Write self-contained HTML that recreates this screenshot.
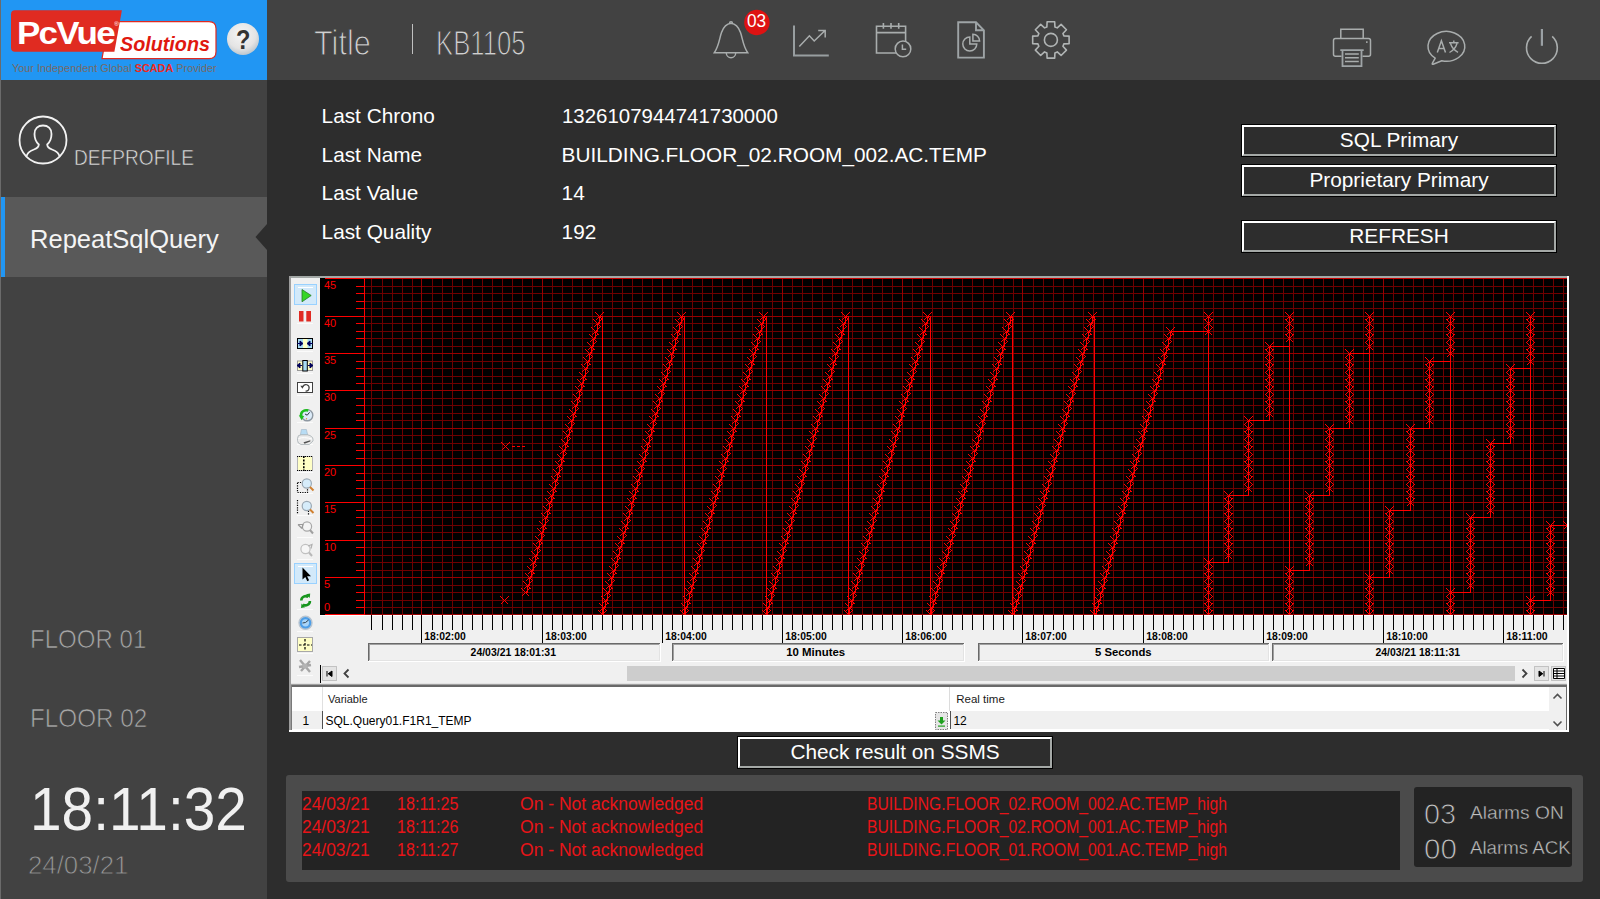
<!DOCTYPE html>
<html><head><meta charset="utf-8"><title>KB1105</title>
<style>
html,body{margin:0;padding:0}
body{width:1600px;height:899px;overflow:hidden;background:#2d2d2d;font-family:"Liberation Sans",sans-serif;position:relative}
.a{position:absolute}
.t{position:absolute;white-space:nowrap;line-height:1;transform-origin:0 0}
.btn{position:absolute;box-sizing:border-box;border:1px solid #000;background:#2d2d2d}
.btn i{position:absolute;left:0;top:0;right:0;bottom:0;border-style:solid;border-width:2px;border-color:#fff #a4a8a6 #a4a8a6 #fff}
svg{position:absolute;overflow:visible}
</style></head><body>

<div class="a" style="left:0;top:0;width:267px;height:899px;background:#424242"></div>
<div class="a" style="left:267px;top:0;width:1333px;height:80px;background:#424242"></div>
<div class="a" style="left:0;top:0;width:1px;height:899px;background:#6b6b6b"></div>
<div class="a" style="left:1px;top:0;width:266px;height:80px;background:#2196f3"></div>
<div class="a" style="left:1px;top:197px;width:266px;height:80px;background:#595959"></div>
<div class="a" style="left:1px;top:197px;width:4px;height:80px;background:#2196f3"></div>
<svg style="left:255px;top:224px" width="12" height="26"><path d="M12 0 L12 26 L0.5 13 Z" fill="#2d2d2d"/></svg>
<svg style="left:0;top:0" width="267" height="80" viewBox="0 0 267 80">
<path d="M108.7 21.6 H209 Q216 21.6 216 28.6 V51.700 Q216 58.700 209 58.700 H102 Z" fill="#fff" stroke="#e0291f" stroke-width="1.2"/>
<path d="M15 10.200 H121.900 L114.400 51.700 H15 Q11 51.700 11 47.700 V14.200 Q11 10.200 15 10.200 Z" fill="#e02b21"/>
<circle cx="243" cy="39" r="16" fill="url(#hg)"/>
<defs><radialGradient id="hg" cx="0.45" cy="0.35" r="0.75"><stop offset="0" stop-color="#f6f6f6"/><stop offset="0.6" stop-color="#e4e4e4"/><stop offset="1" stop-color="#a8b8c4"/></radialGradient></defs>
</svg>
<div class="t" style="left:16.90px;top:17.39px;font-size:32.26px;color:#fff;font-weight:bold;font-style:normal;transform:scaleX(1.0835);letter-spacing:-1.6px;">PcVue</div>
<div class="t" style="left:120.00px;top:33.84px;font-size:20.39px;color:#e0180f;font-weight:bold;font-style:italic;transform:scaleX(0.9689);">Solutions</div>
<div class="t" style="left:113.50px;top:20.92px;font-size:6.00px;color:#fff;font-weight:normal;font-style:normal;transform:scaleX(1.1310);">®</div>
<div class="t" style="left:236.20px;top:26.34px;font-size:28.07px;color:#333;font-weight:bold;font-style:normal;transform:scaleX(0.8397);">?</div>
<div class="t" style="left:11.80px;top:63.12px;font-size:11.31px;color:#786a66;font-weight:normal;font-style:normal;transform:scaleX(0.9607);">Your Independent Global <b style="color:#ee2a1c">SCADA</b> Provider</div>
<div class="t" style="left:314.15px;top:25.16px;font-size:35.20px;color:#d0d0d0;font-weight:normal;font-style:normal;transform:scaleX(0.8714);-webkit-text-stroke:1.1px #424242;">Title</div>
<div class="a" style="left:412px;top:24px;width:1px;height:30px;background:#c0c0c0"></div>
<div class="t" style="left:436.45px;top:25.16px;font-size:35.20px;color:#d0d0d0;font-weight:normal;font-style:normal;transform:scaleX(0.7314);-webkit-text-stroke:1.1px #424242;">KB1105</div>
<svg style="left:18px;top:115px" width="50" height="50" viewBox="0 0 50 50"><circle cx="25" cy="25" r="23.5" fill="none" stroke="#f2f2f2" stroke-width="1.8"/><path d="M8.5 41.5 C9 37.5 12 36 16 34.5 C19.5 33.2 20.8 32 20.8 29.5 C17.5 26.5 16.5 22.5 16.5 19 C16.5 13.5 20 10.5 25 10.5 C30 10.5 33.500 13.5 33.5 19 C33.5 22.5 32.500 26.5 29.2 29.5 C29.2 32 30.500 33.2 34 34.5 C38 36 41 37.5 41.5 41.5" fill="none" stroke="#f2f2f2" stroke-width="1.8"/></svg>
<div class="t" style="left:73.90px;top:146.98px;font-size:22.35px;color:#e0e0e0;font-weight:normal;font-style:normal;transform:scaleX(0.8553);-webkit-text-stroke:0.6px #424242;">DEFPROFILE</div>
<div class="t" style="left:30.00px;top:226.31px;font-size:25.98px;color:#f4f4f4;font-weight:normal;font-style:normal;transform:scaleX(0.9830);">RepeatSqlQuery</div>
<div class="t" style="left:29.85px;top:626.50px;font-size:25.70px;color:#a8a8a8;font-weight:normal;font-style:normal;transform:scaleX(0.9360);-webkit-text-stroke:0.7px #424242;">FLOOR 01</div>
<div class="t" style="left:29.85px;top:706.40px;font-size:25.70px;color:#a8a8a8;font-weight:normal;font-style:normal;transform:scaleX(0.9449);-webkit-text-stroke:0.7px #424242;">FLOOR 02</div>
<div class="t" style="left:29.60px;top:779.15px;font-size:60.89px;color:#f0f0f0;font-weight:normal;font-style:normal;transform:scaleX(0.9328);">18:11:32</div>
<div class="t" style="left:27.80px;top:851.52px;font-size:26.68px;color:#989898;font-weight:normal;font-style:normal;transform:scaleX(0.9669);-webkit-text-stroke:0.8px #424242;">24/03/21</div>
<div class="t" style="left:321.60px;top:105.69px;font-size:20.80px;color:#fff;font-weight:normal;font-style:normal;transform:scaleX(1.0000);">Last Chrono</div>
<div class="t" style="left:561.60px;top:105.69px;font-size:20.80px;color:#fff;font-weight:normal;font-style:normal;transform:scaleX(0.9827);">1326107944741730000</div>
<div class="t" style="left:321.60px;top:144.89px;font-size:20.80px;color:#fff;font-weight:normal;font-style:normal;transform:scaleX(1.0000);">Last Name</div>
<div class="t" style="left:561.60px;top:144.89px;font-size:20.80px;color:#fff;font-weight:normal;font-style:normal;transform:scaleX(1.0000);">BUILDING.FLOOR_02.ROOM_002.AC.TEMP</div>
<div class="t" style="left:321.60px;top:182.99px;font-size:20.80px;color:#fff;font-weight:normal;font-style:normal;transform:scaleX(1.0000);">Last Value</div>
<div class="t" style="left:561.60px;top:182.99px;font-size:20.80px;color:#fff;font-weight:normal;font-style:normal;transform:scaleX(1.0000);">14</div>
<div class="t" style="left:321.60px;top:221.69px;font-size:20.80px;color:#fff;font-weight:normal;font-style:normal;transform:scaleX(1.0000);">Last Quality</div>
<div class="t" style="left:561.60px;top:221.69px;font-size:20.80px;color:#fff;font-weight:normal;font-style:normal;transform:scaleX(1.0000);">192</div>
<div class="btn" style="left:1241px;top:124px;width:316px;height:33px"><i></i></div>
<div class="t" style="left:1339.86px;top:129.79px;font-size:20.80px;color:#fff;font-weight:normal;font-style:normal;transform:scaleX(1.0000);">SQL Primary</div>
<div class="btn" style="left:1241px;top:164px;width:316px;height:33px"><i></i></div>
<div class="t" style="left:1309.43px;top:169.79px;font-size:20.80px;color:#fff;font-weight:normal;font-style:normal;transform:scaleX(1.0000);">Proprietary Primary</div>
<div class="btn" style="left:1241px;top:220px;width:316px;height:33px"><i></i></div>
<div class="t" style="left:1349.31px;top:225.79px;font-size:20.80px;color:#fff;font-weight:normal;font-style:normal;transform:scaleX(1.0000);">REFRESH</div>
<div class="btn" style="left:737px;top:736px;width:316px;height:33px"><i></i></div>
<div class="t" style="left:790.38px;top:741.79px;font-size:20.80px;color:#fff;font-weight:normal;font-style:normal;transform:scaleX(1.0000);">Check result on SSMS</div>
<div class="a" style="left:286px;top:775px;width:1297px;height:107px;background:#4b4b4b;border-radius:3px"></div>
<div class="a" style="left:302px;top:791px;width:1098px;height:79px;background:#232323"></div>
<div class="a" style="left:1414px;top:787px;width:158px;height:80px;background:#232323;border-radius:3px"></div>
<div class="t" style="left:301.70px;top:796.00px;font-size:17.60px;color:#e81418;font-weight:normal;font-style:normal;transform:scaleX(0.9882);">24/03/21</div>
<div class="t" style="left:397.30px;top:796.00px;font-size:17.60px;color:#e81418;font-weight:normal;font-style:normal;transform:scaleX(0.9151);">18:11:25</div>
<div class="t" style="left:520.30px;top:796.00px;font-size:17.60px;color:#e81418;font-weight:normal;font-style:normal;transform:scaleX(0.9961);">On - Not acknowledged</div>
<div class="t" style="left:866.80px;top:796.00px;font-size:17.60px;color:#e81418;font-weight:normal;font-style:normal;transform:scaleX(0.8938);">BUILDING.FLOOR_02.ROOM_002.AC.TEMP_high</div>
<div class="t" style="left:301.70px;top:818.90px;font-size:17.60px;color:#e81418;font-weight:normal;font-style:normal;transform:scaleX(0.9882);">24/03/21</div>
<div class="t" style="left:397.30px;top:818.90px;font-size:17.60px;color:#e81418;font-weight:normal;font-style:normal;transform:scaleX(0.9151);">18:11:26</div>
<div class="t" style="left:520.30px;top:818.90px;font-size:17.60px;color:#e81418;font-weight:normal;font-style:normal;transform:scaleX(0.9961);">On - Not acknowledged</div>
<div class="t" style="left:866.80px;top:818.90px;font-size:17.60px;color:#e81418;font-weight:normal;font-style:normal;transform:scaleX(0.8938);">BUILDING.FLOOR_02.ROOM_001.AC.TEMP_high</div>
<div class="t" style="left:301.70px;top:841.70px;font-size:17.60px;color:#e81418;font-weight:normal;font-style:normal;transform:scaleX(0.9882);">24/03/21</div>
<div class="t" style="left:397.30px;top:841.70px;font-size:17.60px;color:#e81418;font-weight:normal;font-style:normal;transform:scaleX(0.9151);">18:11:27</div>
<div class="t" style="left:520.30px;top:841.70px;font-size:17.60px;color:#e81418;font-weight:normal;font-style:normal;transform:scaleX(0.9961);">On - Not acknowledged</div>
<div class="t" style="left:866.80px;top:841.70px;font-size:17.60px;color:#e81418;font-weight:normal;font-style:normal;transform:scaleX(0.8938);">BUILDING.FLOOR_01.ROOM_001.AC.TEMP_high</div>
<div class="t" style="left:1423.55px;top:798.71px;font-size:30.17px;color:#c0c0c0;font-weight:normal;font-style:normal;transform:scaleX(0.9566);-webkit-text-stroke:0.9px #232323;">03</div>
<div class="t" style="left:1423.55px;top:833.69px;font-size:30.31px;color:#c0c0c0;font-weight:normal;font-style:normal;transform:scaleX(0.9759);-webkit-text-stroke:0.9px #232323;">00</div>
<div class="t" style="left:1469.60px;top:803.20px;font-size:19.13px;color:#c0c0c0;font-weight:normal;font-style:normal;transform:scaleX(1.0037);-webkit-text-stroke:0.4px #232323;">Alarms ON</div>
<div class="t" style="left:1469.60px;top:838.30px;font-size:19.13px;color:#c0c0c0;font-weight:normal;font-style:normal;transform:scaleX(0.9773);-webkit-text-stroke:0.4px #232323;">Alarms ACK</div>
<svg style="left:0;top:0" width="1600" height="80" viewBox="0 0 1600 80" fill="none" stroke-linecap="butt">
<path d="M714.3 52.700 H747.700 C743 46 742.500 38 740.500 32.500 C738.500 27 735.500 23.800 731 23.300 C726.500 23.800 723.500 27 721.500 32.500 C719.500 38 719 46 714.300 52.700 Z" stroke="#a9adad" stroke-width="1.500"/>
<path d="M729.5 23.500 v-0.300 a1.500 1.400 0 0 1 3 0 v0.300" stroke="#a9adad" stroke-width="1.400"/>
<path d="M726.3 53 a4.700 4.700 0 0 0 9.400 0" stroke="#a9adad" stroke-width="1.400"/>
<circle cx="756.9" cy="22.500" r="12.700" fill="#de1212" stroke="none"/>
<path d="M794 25.500 V55.600 H828.800" stroke="#989ea0" stroke-width="2"/>
<path d="M799.3 46.600 L809.400 35.800 L814.200 41 L824.800 30.800 M818.200 30.500 H825.200 V37.500" stroke="#a9adad" stroke-width="1.500"/>
<path d="M876.500 26.300 H905.600 V53 H876.500 Z M876.500 32.600 H905.600 M883.400 22.900 V28.800 M891 22.900 V28.800 M898.700 22.900 V28.800" stroke="#a9adad" stroke-width="1.600"/>
<circle cx="903" cy="48.900" r="7.800" fill="#424242" stroke="#a9adad" stroke-width="1.500"/>
<path d="M902.400 44.400 V49.300 H906.200" stroke="#a9adad" stroke-width="1.500"/>
<path d="M958.200 22.300 H976 L983.900 30.300 V57.600 H958.200 Z M976 22.300 V30.300 H983.900" stroke="#9ea4a6" stroke-width="1.900"/>
<path d="M969.800 37 A7 7 0 1 0 976.800 44 H969.800 Z" stroke="#a9adad" stroke-width="1.500"/>
<path d="M972.900 34.200 A6.700 6.700 0 0 1 979.600 40.900 H972.900 Z" stroke="#a9adad" stroke-width="1.500"/>
<path d="M1046.88 26.91 L1047.11 21.69 L1054.69 21.69 L1054.92 26.91 L1057.25 27.87 L1061.10 24.35 L1066.45 29.70 L1062.93 33.55 L1063.89 35.88 L1069.11 36.11 L1069.11 43.69 L1063.89 43.92 L1062.93 46.25 L1066.45 50.10 L1061.10 55.45 L1057.25 51.93 L1054.92 52.89 L1054.69 58.11 L1047.11 58.11 L1046.88 52.89 L1044.55 51.93 L1040.70 55.45 L1035.35 50.10 L1038.87 46.25 L1037.91 43.92 L1032.69 43.69 L1032.69 36.11 L1037.91 35.88 L1038.87 33.55 L1035.35 29.70 L1040.70 24.35 L1044.55 27.87 Z" stroke="#b0b4b4" stroke-width="1.600" stroke-linejoin="round"/>
<circle cx="1050.9" cy="39.9" r="6.500" stroke="#b0b4b4" stroke-width="1.600"/>
<path d="M1340.800 38 V29.300 H1363.200 V38" stroke="#a9adad" stroke-width="1.500"/>
<path d="M1341.500 56.300 H1335.500 Q1333.500 56.300 1333.500 54.300 V40.500 Q1333.500 38.500 1335.500 38.500 H1368.500 Q1370.500 38.500 1370.500 40.500 V54.300 Q1370.500 56.300 1368.500 56.300 H1362.500" stroke="#a9adad" stroke-width="1.500"/>
<path d="M1340.300 50.200 H1363.700 M1342.500 50.200 V66.200 H1361.500 V50.200" stroke="#9ea4a6" stroke-width="1.800"/>
<path d="M1345 54 H1358.800 M1345 57.800 H1358.800 M1345 61.600 H1358.800" stroke="#a9adad" stroke-width="1.500"/>
<rect x="1366" y="41.300" width="1.600" height="1.600" fill="#a9adad" stroke="none"/>
<path d="M1435.200 58.200 A18.400 14.900 0 1 1 1441.800 60.800 L1433.200 64.300 Q1432 64.600 1432.300 63.300 Z" stroke="#a9adad" stroke-width="1.500" stroke-linejoin="round"/>
<path d="M1437.300 52.500 L1441.400 40.800 L1445.500 52.500 M1438.700 48.600 H1444.100" stroke="#a9adad" stroke-width="1.500"/>
<path d="M1449 42.700 H1458.600 M1453.800 40.400 V42.700 M1450.500 43.500 Q1452.500 49.500 1458 52.300 M1457 43.500 Q1455.200 49.500 1449.500 52.500" stroke="#a9adad" stroke-width="1.400"/>
<path d="M1552.20 36.46 A15.4 15.4 0 1 1 1531.60 36.46" stroke="#a9adad" stroke-width="1.600"/>
<path d="M1541.900 29 V45.800" stroke="#9aa0a4" stroke-width="2.200"/>
</svg>
<div class="t" style="left:746.80px;top:12.23px;font-size:18.92px;color:#fff;font-weight:normal;font-style:normal;transform:scaleX(0.9121);">03</div>
<svg style="left:289px;top:276px" width="1280" height="456" viewBox="289 276 1280 456">
<rect x="289" y="276" width="1280" height="456" fill="#ffffff"/>
<rect x="289" y="276" width="1278" height="2" fill="#a3a8a6"/>
<rect x="289" y="276" width="2" height="454" fill="#9d9d9d"/>
<rect x="291" y="278" width="1276" height="405" fill="#f0f0f0"/>
<rect x="320" y="278" width="1247" height="337" fill="#000"/>
<rect x="291" y="683" width="1276" height="1" fill="#e3e3e3"/>
<rect x="291" y="684" width="1276" height="1" fill="#a0a0a0"/>
<rect x="291" y="685" width="1276" height="2" fill="#696969"/>
<rect x="291" y="687" width="1276" height="43" fill="#fff"/><rect x="291" y="685" width="1" height="45" fill="#7a7a7a"/>
<rect x="292" y="711" width="30" height="18" fill="#f0f0f0"/>
<rect x="322" y="711" width="1" height="18" fill="#505050"/>
<rect x="322" y="687" width="1" height="24" fill="#e0e0e0"/>
<rect x="951" y="711" width="598" height="18" fill="#f0f0f0"/>
<rect x="950" y="711" width="1" height="18" fill="#505050"/>
<rect x="1549" y="687" width="17" height="43" fill="#f0f0f0"/>
<rect x="1566" y="685" width="1" height="45" fill="#696969"/>
<path d="M1553.5 698.5 L1557.5 694.5 L1561.5 698.5 M1553.5 721.5 L1557.5 725.5 L1561.5 721.5" fill="none" stroke="#505050" stroke-width="1.6"/>
<rect x="949" y="687" width="1" height="24" fill="#dcdcdc"/><rect x="935.5" y="712.500" width="12" height="17" fill="#e6e6e6" stroke="#808080" stroke-width="1" stroke-dasharray="1.500 1"/>
<path d="M940 717 h3 v3.500 h2.500 l-4 4 l-4 -4 h2.500 z" fill="#1ea01e"/><rect x="938" y="725.500" width="7" height="1.200" fill="#1ea01e"/>
<path d="M371.5 279V614M382.5 279V614M392.5 279V614M402.5 279V614M412.5 279V614M432.5 279V614M442.5 279V614M452.5 279V614M462.5 279V614M472.5 279V614M482.5 279V614M492.5 279V614M502.5 279V614M512.5 279V614M522.5 279V614M532.5 279V614M552.5 279V614M562.5 279V614M572.5 279V614M582.5 279V614M592.5 279V614M602.5 279V614M612.5 279V614M622.5 279V614M632.5 279V614M642.5 279V614M652.5 279V614M672.5 279V614M682.5 279V614M692.5 279V614M702.5 279V614M712.5 279V614M722.5 279V614M732.5 279V614M742.5 279V614M752.5 279V614M762.5 279V614M772.5 279V614M792.5 279V614M802.5 279V614M812.5 279V614M822.5 279V614M832.5 279V614M842.5 279V614M852.5 279V614M862.5 279V614M872.5 279V614M882.5 279V614M892.5 279V614M912.5 279V614M922.5 279V614M932.5 279V614M942.5 279V614M952.5 279V614M962.5 279V614M972.5 279V614M983.5 279V614M993.5 279V614M1003.5 279V614M1013.5 279V614M1033.5 279V614M1043.5 279V614M1053.5 279V614M1063.5 279V614M1073.5 279V614M1083.5 279V614M1093.5 279V614M1103.5 279V614M1113.5 279V614M1123.5 279V614M1133.5 279V614M1153.5 279V614M1163.5 279V614M1173.5 279V614M1183.5 279V614M1193.5 279V614M1203.5 279V614M1213.5 279V614M1223.5 279V614M1233.5 279V614M1243.5 279V614M1253.5 279V614M1273.5 279V614M1283.5 279V614M1293.5 279V614M1303.5 279V614M1313.5 279V614M1323.5 279V614M1333.5 279V614M1343.5 279V614M1353.5 279V614M1363.5 279V614M1373.5 279V614M1393.5 279V614M1403.5 279V614M1413.5 279V614M1423.5 279V614M1433.5 279V614M1443.5 279V614M1453.5 279V614M1463.5 279V614M1473.5 279V614M1483.5 279V614M1493.5 279V614M1513.5 279V614M1523.5 279V614M1533.5 279V614M1543.5 279V614M1553.5 279V614M1563.5 279V614" stroke="#6e0000" stroke-width="1" fill="none" shape-rendering="crispEdges"/>
<path d="M365 607.5H1567M365 600.5H1567M365 592.5H1567M365 585.5H1567M365 570.5H1567M365 562.5H1567M365 555.5H1567M365 547.5H1567M365 532.5H1567M365 525.5H1567M365 517.5H1567M365 510.5H1567M365 495.5H1567M365 488.5H1567M365 480.5H1567M365 473.5H1567M365 458.5H1567M365 450.5H1567M365 443.5H1567M365 435.5H1567M365 420.5H1567M365 413.5H1567M365 405.5H1567M365 398.5H1567M365 383.5H1567M365 376.5H1567M365 368.5H1567M365 361.5H1567M365 346.5H1567M365 338.5H1567M365 331.5H1567M365 323.5H1567M365 308.5H1567M365 301.5H1567M365 293.5H1567M365 286.5H1567" stroke="#6e0000" stroke-width="1" fill="none" shape-rendering="crispEdges"/>
<path d="M421.5 279V614M542.5 279V614M662.5 279V614M782.5 279V614M902.5 279V614M1022.5 279V614M1143.5 279V614M1263.5 279V614M1383.5 279V614M1503.5 279V614M365 614.5H1567M365 577.5H1567M365 540.5H1567M365 502.5H1567M365 465.5H1567M365 428.5H1567M365 390.5H1567M365 353.5H1567M365 316.5H1567" stroke="#960000" stroke-width="1" fill="none" shape-rendering="crispEdges"/>
<path d="M325 278.5H1567" stroke="#c80000" stroke-width="1" shape-rendering="crispEdges"/>
<path d="M325 278.5H365" stroke="#ff0000" stroke-width="1" shape-rendering="crispEdges"/>
<path d="M364.5 278V615M325 614.5H365M356 607.5H365M356 600.5H365M356 592.5H365M356 585.5H365M325 577.5H365M356 570.5H365M356 562.5H365M356 555.5H365M356 547.5H365M325 540.5H365M356 532.5H365M356 525.5H365M356 517.5H365M356 510.5H365M325 502.5H365M356 495.5H365M356 488.5H365M356 480.5H365M356 473.5H365M325 465.5H365M356 458.5H365M356 450.5H365M356 443.5H365M356 435.5H365M325 428.5H365M356 420.5H365M356 413.5H365M356 405.5H365M356 398.5H365M325 390.5H365M356 383.5H365M356 376.5H365M356 368.5H365M356 361.5H365M325 353.5H365M356 346.5H365M356 338.5H365M356 331.5H365M356 323.5H365M325 316.5H365M356 308.5H365M356 301.5H365M356 293.5H365M356 286.5H365" stroke="#ff0000" stroke-width="1" fill="none" shape-rendering="crispEdges"/>
<text x="324" y="610.8" font-family="Liberation Sans" font-size="11" fill="#ff0000">0</text>
<text x="324" y="588" font-family="Liberation Sans" font-size="11" fill="#ff0000">5</text>
<text x="324" y="551" font-family="Liberation Sans" font-size="11" fill="#ff0000">10</text>
<text x="324" y="513" font-family="Liberation Sans" font-size="11" fill="#ff0000">15</text>
<text x="324" y="476" font-family="Liberation Sans" font-size="11" fill="#ff0000">20</text>
<text x="324" y="439" font-family="Liberation Sans" font-size="11" fill="#ff0000">25</text>
<text x="324" y="401" font-family="Liberation Sans" font-size="11" fill="#ff0000">30</text>
<text x="324" y="364" font-family="Liberation Sans" font-size="11" fill="#ff0000">35</text>
<text x="324" y="327" font-family="Liberation Sans" font-size="11" fill="#ff0000">40</text>
<text x="324" y="288.8" font-family="Liberation Sans" font-size="11" fill="#ff0000">45</text>
<path d="M525.5 592.5H527.5V585.5H529.5V577.5H531.5V570.5H533.5V562.5H535.5V555.5H537.5V547.5H539.5V540.5H541.5V532.5H543.5V525.5H545.5V517.5H547.5V510.5H549.5V502.5H551.5V495.5H553.5V488.5H555.5V480.5H557.5V473.5H559.5V465.5H561.5V458.5H563.5V450.5H565.5V443.5H567.5V435.5H569.5V428.5H571.5V420.5H573.5V413.5H575.5V405.5H577.5V398.5H579.5V390.5H581.5V383.5H583.5V376.5H585.5V368.5H587.5V361.5H589.5V353.5H591.5V346.5H593.5V338.5H595.5V331.5H597.5V323.5H599.5V316.5H602.5V614.5H603.5V607.5H605.5V600.5H607.5V592.5H609.5V585.5H611.5V577.5H613.5V570.5H615.5V562.5H617.5V555.5H619.5V547.5H621.5V540.5H623.5V532.5H625.5V525.5H627.5V517.5H629.5V510.5H631.5V502.5H633.5V495.5H635.5V488.5H637.5V480.5H639.5V473.5H641.5V465.5H643.5V458.5H645.5V450.5H647.5V443.5H649.5V435.5H651.5V428.5H653.5V420.5H655.5V413.5H657.5V405.5H659.5V398.5H661.5V390.5H663.5V383.5H665.5V376.5H667.5V368.5H669.5V361.5H671.5V353.5H673.5V346.5H675.5V338.5H677.5V331.5H679.5V323.5H681.5V316.5H684.5V614.5H685.5V607.5H687.5V600.5H689.5V592.5H691.5V585.5H693.5V577.5H695.5V570.5H697.5V562.5H699.5V555.5H701.5V547.5H703.5V540.5H705.5V532.5H707.5V525.5H709.5V517.5H711.5V510.5H713.5V502.5H715.5V495.5H717.5V488.5H719.5V480.5H721.5V473.5H723.5V465.5H725.5V458.5H727.5V450.5H729.5V443.5H731.5V435.5H733.5V428.5H735.5V420.5H737.5V413.5H739.5V405.5H741.5V398.5H743.5V390.5H745.5V383.5H747.5V376.5H749.5V368.5H751.5V361.5H753.5V353.5H755.5V346.5H757.5V338.5H759.5V331.5H761.5V323.5H763.5V316.5H766.5V614.5H767.5V607.5H769.5V600.5H771.5V592.5H773.5V585.5H775.5V577.5H777.5V570.5H779.5V562.5H781.5V555.5H783.5V547.5H785.5V540.5H787.5V532.5H789.5V525.5H791.5V517.5H793.5V510.5H795.5V502.5H797.5V495.5H799.5V488.5H801.5V480.5H803.5V473.5H805.5V465.5H807.5V458.5H809.5V450.5H811.5V443.5H813.5V435.5H815.5V428.5H817.5V420.5H819.5V413.5H821.5V405.5H823.5V398.5H825.5V390.5H827.5V383.5H829.5V376.5H831.5V368.5H833.5V361.5H835.5V353.5H837.5V346.5H839.5V338.5H841.5V331.5H843.5V323.5H845.5V316.5H848.5V614.5H849.5V607.5H851.5V600.5H853.5V592.5H855.5V585.5H857.5V577.5H859.5V570.5H861.5V562.5H863.5V555.5H865.5V547.5H867.5V540.5H869.5V532.5H871.5V525.5H873.5V517.5H875.5V510.5H877.5V502.5H879.5V495.5H881.5V488.5H883.5V480.5H885.5V473.5H887.5V465.5H889.5V458.5H891.5V450.5H893.5V443.5H895.5V435.5H897.5V428.5H899.5V420.5H901.5V413.5H903.5V405.5H905.5V398.5H907.5V390.5H909.5V383.5H911.5V376.5H913.5V368.5H915.5V361.5H917.5V353.5H919.5V346.5H921.5V338.5H923.5V331.5H925.5V323.5H927.5V316.5H930.5V614.5H931.5V607.5H933.5V600.5H935.5V592.5H937.5V585.5H939.5V577.5H941.5V570.5H943.5V562.5H946.5V555.5H948.5V547.5H950.5V540.5H952.5V532.5H954.5V525.5H956.5V517.5H958.5V510.5H960.5V502.5H962.5V495.5H964.5V488.5H966.5V480.5H968.5V473.5H970.5V465.5H972.5V458.5H974.5V450.5H976.5V443.5H978.5V435.5H980.5V428.5H982.5V420.5H984.5V413.5H986.5V405.5H988.5V398.5H990.5V390.5H992.5V383.5H994.5V376.5H996.5V368.5H998.5V361.5H1000.5V353.5H1002.5V346.5H1004.5V338.5H1006.5V331.5H1008.5V323.5H1010.5V316.5H1012.5V614.5H1014.5V607.5H1016.5V600.5H1018.5V592.5H1020.5V585.5H1022.5V577.5H1024.5V570.5H1026.5V562.5H1028.5V555.5H1030.5V547.5H1032.5V540.5H1034.5V532.5H1036.5V525.5H1038.5V517.5H1040.5V510.5H1042.5V502.5H1044.5V495.5H1046.5V488.5H1048.5V480.5H1050.5V473.5H1052.5V465.5H1054.5V458.5H1056.5V450.5H1058.5V443.5H1060.5V435.5H1062.5V428.5H1064.5V420.5H1066.5V413.5H1068.5V405.5H1070.5V398.5H1072.5V390.5H1074.5V383.5H1076.5V376.5H1078.5V368.5H1080.5V361.5H1082.5V353.5H1084.5V346.5H1086.5V338.5H1088.5V331.5H1090.5V323.5H1092.5V316.5H1094.5V614.5H1096.5V607.5H1098.5V600.5H1100.5V592.5H1102.5V585.5H1104.5V577.5H1106.5V570.5H1108.5V562.5H1110.5V555.5H1112.5V547.5H1114.5V540.5H1116.5V532.5H1118.5V525.5H1120.5V517.5H1122.5V510.5H1124.5V502.5H1126.5V495.5H1128.5V488.5H1130.5V480.5H1132.5V473.5H1134.5V465.5H1136.5V458.5H1138.5V450.5H1140.5V443.5H1142.5V435.5H1144.5V428.5H1146.5V420.5H1148.5V413.5H1150.5V405.5H1152.5V398.5H1154.5V390.5H1156.5V383.5H1158.5V376.5H1160.5V368.5H1162.5V361.5H1164.5V353.5H1166.5V346.5H1168.5V338.5H1170.5V331.5H1208.5V331.5H1208.5V323.5H1208.5V316.5H1208.5V614.5H1208.5V607.5H1208.5V600.5H1208.5V592.5H1208.5V585.5H1208.5V577.5H1208.5V570.5H1208.5V562.5H1228.5V555.5H1228.5V547.5H1228.5V540.5H1228.5V532.5H1228.5V525.5H1228.5V517.5H1228.5V510.5H1228.5V502.5H1228.5V495.5H1248.5V488.5H1248.5V480.5H1248.5V473.5H1248.5V465.5H1248.5V458.5H1248.5V450.5H1248.5V443.5H1248.5V435.5H1248.5V428.5H1248.5V420.5H1269.5V413.5H1269.5V405.5H1269.5V398.5H1269.5V390.5H1269.5V383.5H1269.5V376.5H1269.5V368.5H1269.5V361.5H1269.5V353.5H1269.5V346.5H1289.5V338.5H1289.5V331.5H1289.5V323.5H1289.5V316.5H1289.5V614.5H1289.5V607.5H1289.5V600.5H1289.5V592.5H1289.5V585.5H1289.5V577.5H1289.5V570.5H1309.5V562.5H1309.5V555.5H1309.5V547.5H1309.5V540.5H1309.5V532.5H1309.5V525.5H1309.5V517.5H1309.5V510.5H1309.5V502.5H1309.5V495.5H1329.5V488.5H1329.5V480.5H1329.5V473.5H1329.5V465.5H1329.5V458.5H1329.5V450.5H1329.5V443.5H1329.5V435.5H1329.5V428.5H1349.5V420.5H1349.5V413.5H1349.5V405.5H1349.5V398.5H1349.5V390.5H1349.5V383.5H1349.5V376.5H1349.5V368.5H1349.5V361.5H1349.5V353.5H1369.5V346.5H1369.5V338.5H1369.5V331.5H1369.5V323.5H1369.5V316.5H1369.5V614.5H1369.5V607.5H1369.5V600.5H1369.5V592.5H1369.5V585.5H1369.5V577.5H1389.5V570.5H1389.5V562.5H1389.5V555.5H1389.5V547.5H1389.5V540.5H1389.5V532.5H1389.5V525.5H1389.5V517.5H1389.5V510.5H1410.5V502.5H1410.5V495.5H1410.5V488.5H1410.5V480.5H1410.5V473.5H1410.5V465.5H1410.5V458.5H1410.5V450.5H1410.5V443.5H1410.5V435.5H1410.5V428.5H1429.5V420.5H1429.5V413.5H1429.5V405.5H1429.5V398.5H1429.5V390.5H1429.5V383.5H1429.5V376.5H1429.5V368.5H1429.5V361.5H1450.5V353.5H1450.5V346.5H1450.5V338.5H1450.5V331.5H1450.5V323.5H1450.5V316.5H1450.5V614.5H1450.5V607.5H1450.5V600.5H1450.5V592.5H1470.5V585.5H1470.5V577.5H1470.5V570.5H1470.5V562.5H1470.5V555.5H1470.5V547.5H1470.5V540.5H1470.5V532.5H1470.5V525.5H1470.5V517.5H1490.5V510.5H1490.5V502.5H1490.5V495.5H1490.5V488.5H1490.5V480.5H1490.5V473.5H1490.5V465.5H1490.5V458.5H1490.5V450.5H1490.5V443.5H1510.5V435.5H1510.5V428.5H1510.5V420.5H1510.5V413.5H1510.5V405.5H1510.5V398.5H1510.5V390.5H1510.5V383.5H1510.5V376.5H1510.5V368.5H1530.5V361.5H1530.5V353.5H1530.5V346.5H1530.5V338.5H1530.5V331.5H1530.5V323.5H1530.5V316.5H1530.5V614.5H1530.5V607.5H1530.5V600.5H1550.5V592.5H1550.5V585.5H1550.5V577.5H1550.5V570.5H1550.5V562.5H1550.5V555.5H1550.5V547.5H1550.5V540.5H1550.5V532.5H1550.5V525.5H1567" stroke="#ff0000" stroke-width="1" fill="none" shape-rendering="crispEdges"/>
<clipPath id="pc"><rect x="320" y="278" width="1247" height="337"/></clipPath>
<path clip-path="url(#pc)" d="M521.5 588.5l8 8M521.5 596.5l8 -8M523.5 581.5l8 8M523.5 589.5l8 -8M525.5 573.5l8 8M525.5 581.5l8 -8M527.5 566.5l8 8M527.5 574.5l8 -8M529.5 558.5l8 8M529.5 566.5l8 -8M531.5 551.5l8 8M531.5 559.5l8 -8M533.5 543.5l8 8M533.5 551.5l8 -8M535.5 536.5l8 8M535.5 544.5l8 -8M537.5 528.5l8 8M537.5 536.5l8 -8M539.5 521.5l8 8M539.5 529.5l8 -8M541.5 513.5l8 8M541.5 521.5l8 -8M543.5 506.5l8 8M543.5 514.5l8 -8M545.5 498.5l8 8M545.5 506.5l8 -8M547.5 491.5l8 8M547.5 499.5l8 -8M549.5 484.5l8 8M549.5 492.5l8 -8M551.5 476.5l8 8M551.5 484.5l8 -8M553.5 469.5l8 8M553.5 477.5l8 -8M555.5 461.5l8 8M555.5 469.5l8 -8M557.5 454.5l8 8M557.5 462.5l8 -8M559.5 446.5l8 8M559.5 454.5l8 -8M561.5 439.5l8 8M561.5 447.5l8 -8M563.5 431.5l8 8M563.5 439.5l8 -8M565.5 424.5l8 8M565.5 432.5l8 -8M567.5 416.5l8 8M567.5 424.5l8 -8M569.5 409.5l8 8M569.5 417.5l8 -8M571.5 401.5l8 8M571.5 409.5l8 -8M573.5 394.5l8 8M573.5 402.5l8 -8M575.5 386.5l8 8M575.5 394.5l8 -8M577.5 379.5l8 8M577.5 387.5l8 -8M579.5 372.5l8 8M579.5 380.5l8 -8M581.5 364.5l8 8M581.5 372.5l8 -8M583.5 357.5l8 8M583.5 365.5l8 -8M585.5 349.5l8 8M585.5 357.5l8 -8M587.5 342.5l8 8M587.5 350.5l8 -8M589.5 334.5l8 8M589.5 342.5l8 -8M591.5 327.5l8 8M591.5 335.5l8 -8M593.5 319.5l8 8M593.5 327.5l8 -8M595.5 312.5l8 8M595.5 320.5l8 -8M598.5 610.5l8 8M598.5 618.5l8 -8M599.5 603.5l8 8M599.5 611.5l8 -8M601.5 596.5l8 8M601.5 604.5l8 -8M603.5 588.5l8 8M603.5 596.5l8 -8M605.5 581.5l8 8M605.5 589.5l8 -8M607.5 573.5l8 8M607.5 581.5l8 -8M609.5 566.5l8 8M609.5 574.5l8 -8M611.5 558.5l8 8M611.5 566.5l8 -8M613.5 551.5l8 8M613.5 559.5l8 -8M615.5 543.5l8 8M615.5 551.5l8 -8M617.5 536.5l8 8M617.5 544.5l8 -8M619.5 528.5l8 8M619.5 536.5l8 -8M621.5 521.5l8 8M621.5 529.5l8 -8M623.5 513.5l8 8M623.5 521.5l8 -8M625.5 506.5l8 8M625.5 514.5l8 -8M627.5 498.5l8 8M627.5 506.5l8 -8M629.5 491.5l8 8M629.5 499.5l8 -8M631.5 484.5l8 8M631.5 492.5l8 -8M633.5 476.5l8 8M633.5 484.5l8 -8M635.5 469.5l8 8M635.5 477.5l8 -8M637.5 461.5l8 8M637.5 469.5l8 -8M639.5 454.5l8 8M639.5 462.5l8 -8M641.5 446.5l8 8M641.5 454.5l8 -8M643.5 439.5l8 8M643.5 447.5l8 -8M645.5 431.5l8 8M645.5 439.5l8 -8M647.5 424.5l8 8M647.5 432.5l8 -8M649.5 416.5l8 8M649.5 424.5l8 -8M651.5 409.5l8 8M651.5 417.5l8 -8M653.5 401.5l8 8M653.5 409.5l8 -8M655.5 394.5l8 8M655.5 402.5l8 -8M657.5 386.5l8 8M657.5 394.5l8 -8M659.5 379.5l8 8M659.5 387.5l8 -8M661.5 372.5l8 8M661.5 380.5l8 -8M663.5 364.5l8 8M663.5 372.5l8 -8M665.5 357.5l8 8M665.5 365.5l8 -8M667.5 349.5l8 8M667.5 357.5l8 -8M669.5 342.5l8 8M669.5 350.5l8 -8M671.5 334.5l8 8M671.5 342.5l8 -8M673.5 327.5l8 8M673.5 335.5l8 -8M675.5 319.5l8 8M675.5 327.5l8 -8M677.5 312.5l8 8M677.5 320.5l8 -8M680.5 610.5l8 8M680.5 618.5l8 -8M681.5 603.5l8 8M681.5 611.5l8 -8M683.5 596.5l8 8M683.5 604.5l8 -8M685.5 588.5l8 8M685.5 596.5l8 -8M687.5 581.5l8 8M687.5 589.5l8 -8M689.5 573.5l8 8M689.5 581.5l8 -8M691.5 566.5l8 8M691.5 574.5l8 -8M693.5 558.5l8 8M693.5 566.5l8 -8M695.5 551.5l8 8M695.5 559.5l8 -8M697.5 543.5l8 8M697.5 551.5l8 -8M699.5 536.5l8 8M699.5 544.5l8 -8M701.5 528.5l8 8M701.5 536.5l8 -8M703.5 521.5l8 8M703.5 529.5l8 -8M705.5 513.5l8 8M705.5 521.5l8 -8M707.5 506.5l8 8M707.5 514.5l8 -8M709.5 498.5l8 8M709.5 506.5l8 -8M711.5 491.5l8 8M711.5 499.5l8 -8M713.5 484.5l8 8M713.5 492.5l8 -8M715.5 476.5l8 8M715.5 484.5l8 -8M717.5 469.5l8 8M717.5 477.5l8 -8M719.5 461.5l8 8M719.5 469.5l8 -8M721.5 454.5l8 8M721.5 462.5l8 -8M723.5 446.5l8 8M723.5 454.5l8 -8M725.5 439.5l8 8M725.5 447.5l8 -8M727.5 431.5l8 8M727.5 439.5l8 -8M729.5 424.5l8 8M729.5 432.5l8 -8M731.5 416.5l8 8M731.5 424.5l8 -8M733.5 409.5l8 8M733.5 417.5l8 -8M735.5 401.5l8 8M735.5 409.5l8 -8M737.5 394.5l8 8M737.5 402.5l8 -8M739.5 386.5l8 8M739.5 394.5l8 -8M741.5 379.5l8 8M741.5 387.5l8 -8M743.5 372.5l8 8M743.5 380.5l8 -8M745.5 364.5l8 8M745.5 372.5l8 -8M747.5 357.5l8 8M747.5 365.5l8 -8M749.5 349.5l8 8M749.5 357.5l8 -8M751.5 342.5l8 8M751.5 350.5l8 -8M753.5 334.5l8 8M753.5 342.5l8 -8M755.5 327.5l8 8M755.5 335.5l8 -8M757.5 319.5l8 8M757.5 327.5l8 -8M759.5 312.5l8 8M759.5 320.5l8 -8M762.5 610.5l8 8M762.5 618.5l8 -8M763.5 603.5l8 8M763.5 611.5l8 -8M765.5 596.5l8 8M765.5 604.5l8 -8M767.5 588.5l8 8M767.5 596.5l8 -8M769.5 581.5l8 8M769.5 589.5l8 -8M771.5 573.5l8 8M771.5 581.5l8 -8M773.5 566.5l8 8M773.5 574.5l8 -8M775.5 558.5l8 8M775.5 566.5l8 -8M777.5 551.5l8 8M777.5 559.5l8 -8M779.5 543.5l8 8M779.5 551.5l8 -8M781.5 536.5l8 8M781.5 544.5l8 -8M783.5 528.5l8 8M783.5 536.5l8 -8M785.5 521.5l8 8M785.5 529.5l8 -8M787.5 513.5l8 8M787.5 521.5l8 -8M789.5 506.5l8 8M789.5 514.5l8 -8M791.5 498.5l8 8M791.5 506.5l8 -8M793.5 491.5l8 8M793.5 499.5l8 -8M795.5 484.5l8 8M795.5 492.5l8 -8M797.5 476.5l8 8M797.5 484.5l8 -8M799.5 469.5l8 8M799.5 477.5l8 -8M801.5 461.5l8 8M801.5 469.5l8 -8M803.5 454.5l8 8M803.5 462.5l8 -8M805.5 446.5l8 8M805.5 454.5l8 -8M807.5 439.5l8 8M807.5 447.5l8 -8M809.5 431.5l8 8M809.5 439.5l8 -8M811.5 424.5l8 8M811.5 432.5l8 -8M813.5 416.5l8 8M813.5 424.5l8 -8M815.5 409.5l8 8M815.5 417.5l8 -8M817.5 401.5l8 8M817.5 409.5l8 -8M819.5 394.5l8 8M819.5 402.5l8 -8M821.5 386.5l8 8M821.5 394.5l8 -8M823.5 379.5l8 8M823.5 387.5l8 -8M825.5 372.5l8 8M825.5 380.5l8 -8M827.5 364.5l8 8M827.5 372.5l8 -8M829.5 357.5l8 8M829.5 365.5l8 -8M831.5 349.5l8 8M831.5 357.5l8 -8M833.5 342.5l8 8M833.5 350.5l8 -8M835.5 334.5l8 8M835.5 342.5l8 -8M837.5 327.5l8 8M837.5 335.5l8 -8M839.5 319.5l8 8M839.5 327.5l8 -8M841.5 312.5l8 8M841.5 320.5l8 -8M844.5 610.5l8 8M844.5 618.5l8 -8M845.5 603.5l8 8M845.5 611.5l8 -8M847.5 596.5l8 8M847.5 604.5l8 -8M849.5 588.5l8 8M849.5 596.5l8 -8M851.5 581.5l8 8M851.5 589.5l8 -8M853.5 573.5l8 8M853.5 581.5l8 -8M855.5 566.5l8 8M855.5 574.5l8 -8M857.5 558.5l8 8M857.5 566.5l8 -8M859.5 551.5l8 8M859.5 559.5l8 -8M861.5 543.5l8 8M861.5 551.5l8 -8M863.5 536.5l8 8M863.5 544.5l8 -8M865.5 528.5l8 8M865.5 536.5l8 -8M867.5 521.5l8 8M867.5 529.5l8 -8M869.5 513.5l8 8M869.5 521.5l8 -8M871.5 506.5l8 8M871.5 514.5l8 -8M873.5 498.5l8 8M873.5 506.5l8 -8M875.5 491.5l8 8M875.5 499.5l8 -8M877.5 484.5l8 8M877.5 492.5l8 -8M879.5 476.5l8 8M879.5 484.5l8 -8M881.5 469.5l8 8M881.5 477.5l8 -8M883.5 461.5l8 8M883.5 469.5l8 -8M885.5 454.5l8 8M885.5 462.5l8 -8M887.5 446.5l8 8M887.5 454.5l8 -8M889.5 439.5l8 8M889.5 447.5l8 -8M891.5 431.5l8 8M891.5 439.5l8 -8M893.5 424.5l8 8M893.5 432.5l8 -8M895.5 416.5l8 8M895.5 424.5l8 -8M897.5 409.5l8 8M897.5 417.5l8 -8M899.5 401.5l8 8M899.5 409.5l8 -8M901.5 394.5l8 8M901.5 402.5l8 -8M903.5 386.5l8 8M903.5 394.5l8 -8M905.5 379.5l8 8M905.5 387.5l8 -8M907.5 372.5l8 8M907.5 380.5l8 -8M909.5 364.5l8 8M909.5 372.5l8 -8M911.5 357.5l8 8M911.5 365.5l8 -8M913.5 349.5l8 8M913.5 357.5l8 -8M915.5 342.5l8 8M915.5 350.5l8 -8M917.5 334.5l8 8M917.5 342.5l8 -8M919.5 327.5l8 8M919.5 335.5l8 -8M921.5 319.5l8 8M921.5 327.5l8 -8M923.5 312.5l8 8M923.5 320.5l8 -8M926.5 610.5l8 8M926.5 618.5l8 -8M927.5 603.5l8 8M927.5 611.5l8 -8M929.5 596.5l8 8M929.5 604.5l8 -8M931.5 588.5l8 8M931.5 596.5l8 -8M933.5 581.5l8 8M933.5 589.5l8 -8M935.5 573.5l8 8M935.5 581.5l8 -8M937.5 566.5l8 8M937.5 574.5l8 -8M939.5 558.5l8 8M939.5 566.5l8 -8M942.5 551.5l8 8M942.5 559.5l8 -8M944.5 543.5l8 8M944.5 551.5l8 -8M946.5 536.5l8 8M946.5 544.5l8 -8M948.5 528.5l8 8M948.5 536.5l8 -8M950.5 521.5l8 8M950.5 529.5l8 -8M952.5 513.5l8 8M952.5 521.5l8 -8M954.5 506.5l8 8M954.5 514.5l8 -8M956.5 498.5l8 8M956.5 506.5l8 -8M958.5 491.5l8 8M958.5 499.5l8 -8M960.5 484.5l8 8M960.5 492.5l8 -8M962.5 476.5l8 8M962.5 484.5l8 -8M964.5 469.5l8 8M964.5 477.5l8 -8M966.5 461.5l8 8M966.5 469.5l8 -8M968.5 454.5l8 8M968.5 462.5l8 -8M970.5 446.5l8 8M970.5 454.5l8 -8M972.5 439.5l8 8M972.5 447.5l8 -8M974.5 431.5l8 8M974.5 439.5l8 -8M976.5 424.5l8 8M976.5 432.5l8 -8M978.5 416.5l8 8M978.5 424.5l8 -8M980.5 409.5l8 8M980.5 417.5l8 -8M982.5 401.5l8 8M982.5 409.5l8 -8M984.5 394.5l8 8M984.5 402.5l8 -8M986.5 386.5l8 8M986.5 394.5l8 -8M988.5 379.5l8 8M988.5 387.5l8 -8M990.5 372.5l8 8M990.5 380.5l8 -8M992.5 364.5l8 8M992.5 372.5l8 -8M994.5 357.5l8 8M994.5 365.5l8 -8M996.5 349.5l8 8M996.5 357.5l8 -8M998.5 342.5l8 8M998.5 350.5l8 -8M1000.5 334.5l8 8M1000.5 342.5l8 -8M1002.5 327.5l8 8M1002.5 335.5l8 -8M1004.5 319.5l8 8M1004.5 327.5l8 -8M1006.5 312.5l8 8M1006.5 320.5l8 -8M1008.5 610.5l8 8M1008.5 618.5l8 -8M1010.5 603.5l8 8M1010.5 611.5l8 -8M1012.5 596.5l8 8M1012.5 604.5l8 -8M1014.5 588.5l8 8M1014.5 596.5l8 -8M1016.5 581.5l8 8M1016.5 589.5l8 -8M1018.5 573.5l8 8M1018.5 581.5l8 -8M1020.5 566.5l8 8M1020.5 574.5l8 -8M1022.5 558.5l8 8M1022.5 566.5l8 -8M1024.5 551.5l8 8M1024.5 559.5l8 -8M1026.5 543.5l8 8M1026.5 551.5l8 -8M1028.5 536.5l8 8M1028.5 544.5l8 -8M1030.5 528.5l8 8M1030.5 536.5l8 -8M1032.5 521.5l8 8M1032.5 529.5l8 -8M1034.5 513.5l8 8M1034.5 521.5l8 -8M1036.5 506.5l8 8M1036.5 514.5l8 -8M1038.5 498.5l8 8M1038.5 506.5l8 -8M1040.5 491.5l8 8M1040.5 499.5l8 -8M1042.5 484.5l8 8M1042.5 492.5l8 -8M1044.5 476.5l8 8M1044.5 484.5l8 -8M1046.5 469.5l8 8M1046.5 477.5l8 -8M1048.5 461.5l8 8M1048.5 469.5l8 -8M1050.5 454.5l8 8M1050.5 462.5l8 -8M1052.5 446.5l8 8M1052.5 454.5l8 -8M1054.5 439.5l8 8M1054.5 447.5l8 -8M1056.5 431.5l8 8M1056.5 439.5l8 -8M1058.5 424.5l8 8M1058.5 432.5l8 -8M1060.5 416.5l8 8M1060.5 424.5l8 -8M1062.5 409.5l8 8M1062.5 417.5l8 -8M1064.5 401.5l8 8M1064.5 409.5l8 -8M1066.5 394.5l8 8M1066.5 402.5l8 -8M1068.5 386.5l8 8M1068.5 394.5l8 -8M1070.5 379.5l8 8M1070.5 387.5l8 -8M1072.5 372.5l8 8M1072.5 380.5l8 -8M1074.5 364.5l8 8M1074.5 372.5l8 -8M1076.5 357.5l8 8M1076.5 365.5l8 -8M1078.5 349.5l8 8M1078.5 357.5l8 -8M1080.5 342.5l8 8M1080.5 350.5l8 -8M1082.5 334.5l8 8M1082.5 342.5l8 -8M1084.5 327.5l8 8M1084.5 335.5l8 -8M1086.5 319.5l8 8M1086.5 327.5l8 -8M1088.5 312.5l8 8M1088.5 320.5l8 -8M1090.5 610.5l8 8M1090.5 618.5l8 -8M1092.5 603.5l8 8M1092.5 611.5l8 -8M1094.5 596.5l8 8M1094.5 604.5l8 -8M1096.5 588.5l8 8M1096.5 596.5l8 -8M1098.5 581.5l8 8M1098.5 589.5l8 -8M1100.5 573.5l8 8M1100.5 581.5l8 -8M1102.5 566.5l8 8M1102.5 574.5l8 -8M1104.5 558.5l8 8M1104.5 566.5l8 -8M1106.5 551.5l8 8M1106.5 559.5l8 -8M1108.5 543.5l8 8M1108.5 551.5l8 -8M1110.5 536.5l8 8M1110.5 544.5l8 -8M1112.5 528.5l8 8M1112.5 536.5l8 -8M1114.5 521.5l8 8M1114.5 529.5l8 -8M1116.5 513.5l8 8M1116.5 521.5l8 -8M1118.5 506.5l8 8M1118.5 514.5l8 -8M1120.5 498.5l8 8M1120.5 506.5l8 -8M1122.5 491.5l8 8M1122.5 499.5l8 -8M1124.5 484.5l8 8M1124.5 492.5l8 -8M1126.5 476.5l8 8M1126.5 484.5l8 -8M1128.5 469.5l8 8M1128.5 477.5l8 -8M1130.5 461.5l8 8M1130.5 469.5l8 -8M1132.5 454.5l8 8M1132.5 462.5l8 -8M1134.5 446.5l8 8M1134.5 454.5l8 -8M1136.5 439.5l8 8M1136.5 447.5l8 -8M1138.5 431.5l8 8M1138.5 439.5l8 -8M1140.5 424.5l8 8M1140.5 432.5l8 -8M1142.5 416.5l8 8M1142.5 424.5l8 -8M1144.5 409.5l8 8M1144.5 417.5l8 -8M1146.5 401.5l8 8M1146.5 409.5l8 -8M1148.5 394.5l8 8M1148.5 402.5l8 -8M1150.5 386.5l8 8M1150.5 394.5l8 -8M1152.5 379.5l8 8M1152.5 387.5l8 -8M1154.5 372.5l8 8M1154.5 380.5l8 -8M1156.5 364.5l8 8M1156.5 372.5l8 -8M1158.5 357.5l8 8M1158.5 365.5l8 -8M1160.5 349.5l8 8M1160.5 357.5l8 -8M1162.5 342.5l8 8M1162.5 350.5l8 -8M1164.5 334.5l8 8M1164.5 342.5l8 -8M1166.5 327.5l8 8M1166.5 335.5l8 -8M1204.5 327.5l8 8M1204.5 335.5l8 -8M1204.5 319.5l8 8M1204.5 327.5l8 -8M1204.5 312.5l8 8M1204.5 320.5l8 -8M1204.5 610.5l8 8M1204.5 618.5l8 -8M1204.5 603.5l8 8M1204.5 611.5l8 -8M1204.5 596.5l8 8M1204.5 604.5l8 -8M1204.5 588.5l8 8M1204.5 596.5l8 -8M1204.5 581.5l8 8M1204.5 589.5l8 -8M1204.5 573.5l8 8M1204.5 581.5l8 -8M1204.5 566.5l8 8M1204.5 574.5l8 -8M1204.5 558.5l8 8M1204.5 566.5l8 -8M1224.5 551.5l8 8M1224.5 559.5l8 -8M1224.5 543.5l8 8M1224.5 551.5l8 -8M1224.5 536.5l8 8M1224.5 544.5l8 -8M1224.5 528.5l8 8M1224.5 536.5l8 -8M1224.5 521.5l8 8M1224.5 529.5l8 -8M1224.5 513.5l8 8M1224.5 521.5l8 -8M1224.5 506.5l8 8M1224.5 514.5l8 -8M1224.5 498.5l8 8M1224.5 506.5l8 -8M1224.5 491.5l8 8M1224.5 499.5l8 -8M1244.5 484.5l8 8M1244.5 492.5l8 -8M1244.5 476.5l8 8M1244.5 484.5l8 -8M1244.5 469.5l8 8M1244.5 477.5l8 -8M1244.5 461.5l8 8M1244.5 469.5l8 -8M1244.5 454.5l8 8M1244.5 462.5l8 -8M1244.5 446.5l8 8M1244.5 454.5l8 -8M1244.5 439.5l8 8M1244.5 447.5l8 -8M1244.5 431.5l8 8M1244.5 439.5l8 -8M1244.5 424.5l8 8M1244.5 432.5l8 -8M1244.5 416.5l8 8M1244.5 424.5l8 -8M1265.5 409.5l8 8M1265.5 417.5l8 -8M1265.5 401.5l8 8M1265.5 409.5l8 -8M1265.5 394.5l8 8M1265.5 402.5l8 -8M1265.5 386.5l8 8M1265.5 394.5l8 -8M1265.5 379.5l8 8M1265.5 387.5l8 -8M1265.5 372.5l8 8M1265.5 380.5l8 -8M1265.5 364.5l8 8M1265.5 372.5l8 -8M1265.5 357.5l8 8M1265.5 365.5l8 -8M1265.5 349.5l8 8M1265.5 357.5l8 -8M1265.5 342.5l8 8M1265.5 350.5l8 -8M1285.5 334.5l8 8M1285.5 342.5l8 -8M1285.5 327.5l8 8M1285.5 335.5l8 -8M1285.5 319.5l8 8M1285.5 327.5l8 -8M1285.5 312.5l8 8M1285.5 320.5l8 -8M1285.5 610.5l8 8M1285.5 618.5l8 -8M1285.5 603.5l8 8M1285.5 611.5l8 -8M1285.5 596.5l8 8M1285.5 604.5l8 -8M1285.5 588.5l8 8M1285.5 596.5l8 -8M1285.5 581.5l8 8M1285.5 589.5l8 -8M1285.5 573.5l8 8M1285.5 581.5l8 -8M1285.5 566.5l8 8M1285.5 574.5l8 -8M1305.5 558.5l8 8M1305.5 566.5l8 -8M1305.5 551.5l8 8M1305.5 559.5l8 -8M1305.5 543.5l8 8M1305.5 551.5l8 -8M1305.5 536.5l8 8M1305.5 544.5l8 -8M1305.5 528.5l8 8M1305.5 536.5l8 -8M1305.5 521.5l8 8M1305.5 529.5l8 -8M1305.5 513.5l8 8M1305.5 521.5l8 -8M1305.5 506.5l8 8M1305.5 514.5l8 -8M1305.5 498.5l8 8M1305.5 506.5l8 -8M1305.5 491.5l8 8M1305.5 499.5l8 -8M1325.5 484.5l8 8M1325.5 492.5l8 -8M1325.5 476.5l8 8M1325.5 484.5l8 -8M1325.5 469.5l8 8M1325.5 477.5l8 -8M1325.5 461.5l8 8M1325.5 469.5l8 -8M1325.5 454.5l8 8M1325.5 462.5l8 -8M1325.5 446.5l8 8M1325.5 454.5l8 -8M1325.5 439.5l8 8M1325.5 447.5l8 -8M1325.5 431.5l8 8M1325.5 439.5l8 -8M1325.5 424.5l8 8M1325.5 432.5l8 -8M1345.5 416.5l8 8M1345.5 424.5l8 -8M1345.5 409.5l8 8M1345.5 417.5l8 -8M1345.5 401.5l8 8M1345.5 409.5l8 -8M1345.5 394.5l8 8M1345.5 402.5l8 -8M1345.5 386.5l8 8M1345.5 394.5l8 -8M1345.5 379.5l8 8M1345.5 387.5l8 -8M1345.5 372.5l8 8M1345.5 380.5l8 -8M1345.5 364.5l8 8M1345.5 372.5l8 -8M1345.5 357.5l8 8M1345.5 365.5l8 -8M1345.5 349.5l8 8M1345.5 357.5l8 -8M1365.5 342.5l8 8M1365.5 350.5l8 -8M1365.5 334.5l8 8M1365.5 342.5l8 -8M1365.5 327.5l8 8M1365.5 335.5l8 -8M1365.5 319.5l8 8M1365.5 327.5l8 -8M1365.5 312.5l8 8M1365.5 320.5l8 -8M1365.5 610.5l8 8M1365.5 618.5l8 -8M1365.5 603.5l8 8M1365.5 611.5l8 -8M1365.5 596.5l8 8M1365.5 604.5l8 -8M1365.5 588.5l8 8M1365.5 596.5l8 -8M1365.5 581.5l8 8M1365.5 589.5l8 -8M1365.5 573.5l8 8M1365.5 581.5l8 -8M1385.5 566.5l8 8M1385.5 574.5l8 -8M1385.5 558.5l8 8M1385.5 566.5l8 -8M1385.5 551.5l8 8M1385.5 559.5l8 -8M1385.5 543.5l8 8M1385.5 551.5l8 -8M1385.5 536.5l8 8M1385.5 544.5l8 -8M1385.5 528.5l8 8M1385.5 536.5l8 -8M1385.5 521.5l8 8M1385.5 529.5l8 -8M1385.5 513.5l8 8M1385.5 521.5l8 -8M1385.5 506.5l8 8M1385.5 514.5l8 -8M1406.5 498.5l8 8M1406.5 506.5l8 -8M1406.5 491.5l8 8M1406.5 499.5l8 -8M1406.5 484.5l8 8M1406.5 492.5l8 -8M1406.5 476.5l8 8M1406.5 484.5l8 -8M1406.5 469.5l8 8M1406.5 477.5l8 -8M1406.5 461.5l8 8M1406.5 469.5l8 -8M1406.5 454.5l8 8M1406.5 462.5l8 -8M1406.5 446.5l8 8M1406.5 454.5l8 -8M1406.5 439.5l8 8M1406.5 447.5l8 -8M1406.5 431.5l8 8M1406.5 439.5l8 -8M1406.5 424.5l8 8M1406.5 432.5l8 -8M1425.5 416.5l8 8M1425.5 424.5l8 -8M1425.5 409.5l8 8M1425.5 417.5l8 -8M1425.5 401.5l8 8M1425.5 409.5l8 -8M1425.5 394.5l8 8M1425.5 402.5l8 -8M1425.5 386.5l8 8M1425.5 394.5l8 -8M1425.5 379.5l8 8M1425.5 387.5l8 -8M1425.5 372.5l8 8M1425.5 380.5l8 -8M1425.5 364.5l8 8M1425.5 372.5l8 -8M1425.5 357.5l8 8M1425.5 365.5l8 -8M1446.5 349.5l8 8M1446.5 357.5l8 -8M1446.5 342.5l8 8M1446.5 350.5l8 -8M1446.5 334.5l8 8M1446.5 342.5l8 -8M1446.5 327.5l8 8M1446.5 335.5l8 -8M1446.5 319.5l8 8M1446.5 327.5l8 -8M1446.5 312.5l8 8M1446.5 320.5l8 -8M1446.5 610.5l8 8M1446.5 618.5l8 -8M1446.5 603.5l8 8M1446.5 611.5l8 -8M1446.5 596.5l8 8M1446.5 604.5l8 -8M1446.5 588.5l8 8M1446.5 596.5l8 -8M1466.5 581.5l8 8M1466.5 589.5l8 -8M1466.5 573.5l8 8M1466.5 581.5l8 -8M1466.5 566.5l8 8M1466.5 574.5l8 -8M1466.5 558.5l8 8M1466.5 566.5l8 -8M1466.5 551.5l8 8M1466.5 559.5l8 -8M1466.5 543.5l8 8M1466.5 551.5l8 -8M1466.5 536.5l8 8M1466.5 544.5l8 -8M1466.5 528.5l8 8M1466.5 536.5l8 -8M1466.5 521.5l8 8M1466.5 529.5l8 -8M1466.5 513.5l8 8M1466.5 521.5l8 -8M1486.5 506.5l8 8M1486.5 514.5l8 -8M1486.5 498.5l8 8M1486.5 506.5l8 -8M1486.5 491.5l8 8M1486.5 499.5l8 -8M1486.5 484.5l8 8M1486.5 492.5l8 -8M1486.5 476.5l8 8M1486.5 484.5l8 -8M1486.5 469.5l8 8M1486.5 477.5l8 -8M1486.5 461.5l8 8M1486.5 469.5l8 -8M1486.5 454.5l8 8M1486.5 462.5l8 -8M1486.5 446.5l8 8M1486.5 454.5l8 -8M1486.5 439.5l8 8M1486.5 447.5l8 -8M1506.5 431.5l8 8M1506.5 439.5l8 -8M1506.5 424.5l8 8M1506.5 432.5l8 -8M1506.5 416.5l8 8M1506.5 424.5l8 -8M1506.5 409.5l8 8M1506.5 417.5l8 -8M1506.5 401.5l8 8M1506.5 409.5l8 -8M1506.5 394.5l8 8M1506.5 402.5l8 -8M1506.5 386.5l8 8M1506.5 394.5l8 -8M1506.5 379.5l8 8M1506.5 387.5l8 -8M1506.5 372.5l8 8M1506.5 380.5l8 -8M1506.5 364.5l8 8M1506.5 372.5l8 -8M1526.5 357.5l8 8M1526.5 365.5l8 -8M1526.5 349.5l8 8M1526.5 357.5l8 -8M1526.5 342.5l8 8M1526.5 350.5l8 -8M1526.5 334.5l8 8M1526.5 342.5l8 -8M1526.5 327.5l8 8M1526.5 335.5l8 -8M1526.5 319.5l8 8M1526.5 327.5l8 -8M1526.5 312.5l8 8M1526.5 320.5l8 -8M1526.5 610.5l8 8M1526.5 618.5l8 -8M1526.5 603.5l8 8M1526.5 611.5l8 -8M1526.5 596.5l8 8M1526.5 604.5l8 -8M1546.5 588.5l8 8M1546.5 596.5l8 -8M1546.5 581.5l8 8M1546.5 589.5l8 -8M1546.5 573.5l8 8M1546.5 581.5l8 -8M1546.5 566.5l8 8M1546.5 574.5l8 -8M1546.5 558.5l8 8M1546.5 566.5l8 -8M1546.5 551.5l8 8M1546.5 559.5l8 -8M1546.5 543.5l8 8M1546.5 551.5l8 -8M1546.5 536.5l8 8M1546.5 544.5l8 -8M1546.5 528.5l8 8M1546.5 536.5l8 -8M1546.5 521.5l8 8M1546.5 529.5l8 -8M501.5 442.5l8 8M501.5 450.5l8 -8M500.5 596.5l8 8M500.5 604.5l8 -8M1563.5 521.5l8 8M1563.5 529.5l8 -8" stroke="#ff0000" stroke-width="1" fill="none" shape-rendering="crispEdges"/>
<path d="M512 446.5h3M517 446.5h3M522 446.5h3" stroke="#ff0000" stroke-width="1" shape-rendering="crispEdges"/>
<rect x="320" y="615" width="1247" height="1" fill="#fff"/>
<path d="M371.5 615V630M382.5 615V630M392.5 615V630M402.5 615V630M412.5 615V630M432.5 615V630M442.5 615V630M452.5 615V630M462.5 615V630M472.5 615V630M482.5 615V630M492.5 615V630M502.5 615V630M512.5 615V630M522.5 615V630M532.5 615V630M552.5 615V630M562.5 615V630M572.5 615V630M582.5 615V630M592.5 615V630M602.5 615V630M612.5 615V630M622.5 615V630M632.5 615V630M642.5 615V630M652.5 615V630M672.5 615V630M682.5 615V630M692.5 615V630M702.5 615V630M712.5 615V630M722.5 615V630M732.5 615V630M742.5 615V630M752.5 615V630M762.5 615V630M772.5 615V630M792.5 615V630M802.5 615V630M812.5 615V630M822.5 615V630M832.5 615V630M842.5 615V630M852.5 615V630M862.5 615V630M872.5 615V630M882.5 615V630M892.5 615V630M912.5 615V630M922.5 615V630M932.5 615V630M942.5 615V630M952.5 615V630M962.5 615V630M972.5 615V630M983.5 615V630M993.5 615V630M1003.5 615V630M1013.5 615V630M1033.5 615V630M1043.5 615V630M1053.5 615V630M1063.5 615V630M1073.5 615V630M1083.5 615V630M1093.5 615V630M1103.5 615V630M1113.5 615V630M1123.5 615V630M1133.5 615V630M1153.5 615V630M1163.5 615V630M1173.5 615V630M1183.5 615V630M1193.5 615V630M1203.5 615V630M1213.5 615V630M1223.5 615V630M1233.5 615V630M1243.5 615V630M1253.5 615V630M1273.5 615V630M1283.5 615V630M1293.5 615V630M1303.5 615V630M1313.5 615V630M1323.5 615V630M1333.5 615V630M1343.5 615V630M1353.5 615V630M1363.5 615V630M1373.5 615V630M1393.5 615V630M1403.5 615V630M1413.5 615V630M1423.5 615V630M1433.5 615V630M1443.5 615V630M1453.5 615V630M1463.5 615V630M1473.5 615V630M1483.5 615V630M1493.5 615V630M1513.5 615V630M1523.5 615V630M1533.5 615V630M1543.5 615V630M1553.5 615V630M1563.5 615V630M421.5 615V643M542.5 615V643M662.5 615V643M782.5 615V643M902.5 615V643M1022.5 615V643M1143.5 615V643M1263.5 615V643M1383.5 615V643M1503.5 615V643" stroke="#000" stroke-width="1" fill="none" shape-rendering="crispEdges"/>
<text x="424.2" y="640" textLength="41.5" lengthAdjust="spacingAndGlyphs" font-family="Liberation Sans" font-weight="bold" font-size="10.8" fill="#000">18:02:00</text>
<text x="545.2" y="640" textLength="41.5" lengthAdjust="spacingAndGlyphs" font-family="Liberation Sans" font-weight="bold" font-size="10.8" fill="#000">18:03:00</text>
<text x="665.2" y="640" textLength="41.5" lengthAdjust="spacingAndGlyphs" font-family="Liberation Sans" font-weight="bold" font-size="10.8" fill="#000">18:04:00</text>
<text x="785.2" y="640" textLength="41.5" lengthAdjust="spacingAndGlyphs" font-family="Liberation Sans" font-weight="bold" font-size="10.8" fill="#000">18:05:00</text>
<text x="905.2" y="640" textLength="41.5" lengthAdjust="spacingAndGlyphs" font-family="Liberation Sans" font-weight="bold" font-size="10.8" fill="#000">18:06:00</text>
<text x="1025.2" y="640" textLength="41.5" lengthAdjust="spacingAndGlyphs" font-family="Liberation Sans" font-weight="bold" font-size="10.8" fill="#000">18:07:00</text>
<text x="1146.2" y="640" textLength="41.5" lengthAdjust="spacingAndGlyphs" font-family="Liberation Sans" font-weight="bold" font-size="10.8" fill="#000">18:08:00</text>
<text x="1266.2" y="640" textLength="41.5" lengthAdjust="spacingAndGlyphs" font-family="Liberation Sans" font-weight="bold" font-size="10.8" fill="#000">18:09:00</text>
<text x="1386.2" y="640" textLength="41.5" lengthAdjust="spacingAndGlyphs" font-family="Liberation Sans" font-weight="bold" font-size="10.8" fill="#000">18:10:00</text>
<text x="1506.2" y="640" textLength="41.5" lengthAdjust="spacingAndGlyphs" font-family="Liberation Sans" font-weight="bold" font-size="10.8" fill="#000">18:11:00</text>
<rect x="368" y="643" width="293" height="19" fill="#fff"/>
<rect x="368" y="643" width="292" height="18" fill="#696969"/>
<rect x="369" y="644" width="291" height="17" fill="#e3e3e3"/>
<rect x="369" y="644" width="290" height="16" fill="#a0a0a0"/>
<rect x="370" y="645" width="289" height="15" fill="#f0f0f0"/>
<text x="470.59999999999997" y="656" textLength="85.4" lengthAdjust="spacingAndGlyphs" font-family="Liberation Sans" font-weight="bold" font-size="10.8" fill="#000">24/03/21 18:01:31</text>
<rect x="672" y="643" width="293" height="19" fill="#fff"/>
<rect x="672" y="643" width="292" height="18" fill="#696969"/>
<rect x="673" y="644" width="291" height="17" fill="#e3e3e3"/>
<rect x="673" y="644" width="290" height="16" fill="#a0a0a0"/>
<rect x="674" y="645" width="289" height="15" fill="#f0f0f0"/>
<text x="786.2" y="656" textLength="59" lengthAdjust="spacingAndGlyphs" font-family="Liberation Sans" font-weight="bold" font-size="10.8" fill="#000">10 Minutes</text>
<rect x="978" y="643" width="292" height="19" fill="#fff"/>
<rect x="978" y="643" width="291" height="18" fill="#696969"/>
<rect x="979" y="644" width="290" height="17" fill="#e3e3e3"/>
<rect x="979" y="644" width="289" height="16" fill="#a0a0a0"/>
<rect x="980" y="645" width="288" height="15" fill="#f0f0f0"/>
<text x="1095.0" y="656" textLength="56.6" lengthAdjust="spacingAndGlyphs" font-family="Liberation Sans" font-weight="bold" font-size="10.8" fill="#000">5 Seconds</text>
<rect x="1272" y="643" width="292" height="19" fill="#fff"/>
<rect x="1272" y="643" width="291" height="18" fill="#696969"/>
<rect x="1273" y="644" width="290" height="17" fill="#e3e3e3"/>
<rect x="1273" y="644" width="289" height="16" fill="#a0a0a0"/>
<rect x="1274" y="645" width="288" height="15" fill="#f0f0f0"/>
<text x="1375.5" y="656" textLength="84.6" lengthAdjust="spacingAndGlyphs" font-family="Liberation Sans" font-weight="bold" font-size="10.8" fill="#000">24/03/21 18:11:31</text>
<rect x="320" y="665" width="1" height="18" fill="#000"/>
<rect x="627" y="666" width="888" height="15" fill="#cdcdcd"/>
<rect x="322.5" y="666.5" width="14" height="14" fill="#e4e4e4" stroke="#9a9a9a" stroke-width="1" stroke-dasharray="1 1"/>
<rect x="1534.5" y="666.5" width="14" height="14" fill="#e4e4e4" stroke="#9a9a9a" stroke-width="1" stroke-dasharray="1 1"/>
<rect x="1551.5" y="666.5" width="14" height="14" fill="#e4e4e4" stroke="#9a9a9a" stroke-width="1" stroke-dasharray="1 1"/>
<path d="M327 671v5.500M332 671l-3.800 2.750l3.800 2.750z" stroke="#000" stroke-width="1" fill="#000"/>
<path d="M1544 671v5.500M1539 671l3.800 2.750l-3.800 2.750z" stroke="#000" stroke-width="1" fill="#000"/>
<path d="M348.5 669.500l-4 4l4 4" stroke="#404040" stroke-width="1.800" fill="none"/>
<path d="M1522.5 669.500l4 4l-4 4" stroke="#404040" stroke-width="1.800" fill="none"/>
<path d="M1553.5 668.5h11v10h-11zM1553.500 671h11M1553.500 673.5h11M1553.500 676h11M1557 668.500v10" stroke="#000" stroke-width="1" fill="#fff"/>
<text x="328" y="703" font-family="Liberation Sans" font-size="11" fill="#1a1a1a">Variable</text>
<text x="956.2" y="703" textLength="48.6" lengthAdjust="spacingAndGlyphs" font-family="Liberation Sans" font-size="11.3" fill="#1a1a1a">Real time</text>
<text x="302.5" y="725" font-family="Liberation Sans" font-size="12" fill="#000">1</text>
<text x="325.5" y="725" font-family="Liberation Sans" font-size="12" fill="#000">SQL.Query01.F1R1_TEMP</text>
<text x="953.4" y="725" font-family="Liberation Sans" font-size="12" fill="#000">12</text>
<rect x="294.5" y="284.5" width="22" height="20" fill="#d2e9fa" stroke="#99d1ff" stroke-width="1"/>
<rect x="298" y="287" width="15" height="1" fill="#fff"/>
<rect x="294.5" y="563.5" width="22" height="20" fill="#d2e9fa" stroke="#99d1ff" stroke-width="1"/>
<rect x="298" y="566" width="15" height="1" fill="#fff"/>
<path d="M302 289.500L311.200 295.500L302 301.800Z" fill="#35d628" stroke="#2a7a2a" stroke-width="0.800"/>
<rect x="299" y="311" width="4.500" height="10.500" fill="#e02a22"/><rect x="306.300" y="311" width="4.700" height="10.500" fill="#e02a22"/>
<rect x="297" y="323" width="16" height="1" fill="#fbfbfb"/>
<rect x="297" y="351" width="16" height="1" fill="#fbfbfb"/>
<rect x="297" y="373" width="16" height="1" fill="#fbfbfb"/>
<rect x="297" y="395" width="16" height="1" fill="#fbfbfb"/>
<rect x="297" y="422" width="16" height="1" fill="#fbfbfb"/>
<rect x="297" y="444" width="16" height="1" fill="#fbfbfb"/>
<rect x="297" y="472" width="16" height="1" fill="#fbfbfb"/>
<rect x="297" y="493" width="16" height="1" fill="#fbfbfb"/>
<rect x="297" y="515" width="16" height="1" fill="#fbfbfb"/>
<rect x="297" y="537" width="16" height="1" fill="#fbfbfb"/>
<rect x="297" y="559" width="16" height="1" fill="#fbfbfb"/>
<rect x="297" y="609" width="16" height="1" fill="#fbfbfb"/>
<rect x="297" y="631" width="16" height="1" fill="#fbfbfb"/>
<rect x="297" y="653" width="16" height="1" fill="#fbfbfb"/>
<rect x="297" y="675" width="16" height="1" fill="#fbfbfb"/>
<rect x="297.5" y="338.5" width="15" height="10" fill="#a8dcf4" stroke="#000" stroke-width="1"/><rect x="303" y="339" width="4.500" height="9" fill="#ffffc4"/>
<path d="M297 343.500h5M300 341l3 2.500l-3 2.500zM313 343.500h-5M310 341l-3 2.500l3 2.500z" fill="#00005a" stroke="#00005a" stroke-width="1"/>
<rect x="297.5" y="361" width="15" height="9.500" fill="#ffffc4" stroke="#9a9a9a" stroke-width="1"/><rect x="302.800" y="360.500" width="4.500" height="10.500" fill="#a8dcf4" stroke="#000" stroke-width="1"/>
<path d="M302 365.500h-4.500M300 363l-3 2.500l3 2.500zM308 365.500h4.500M310 363l3 2.500l-3 2.500z" fill="#00005a" stroke="#00005a" stroke-width="1"/>
<rect x="297.5" y="382.500" width="15" height="10" fill="#fff" stroke="#404040" stroke-width="1"/>
<path d="M303 386.500a3.200 3.200 0 1 1 2.500 4.500" fill="none" stroke="#404040" stroke-width="1.200"/><path d="M300.300 385.800l3.700 0l-1.500 3z" fill="#404040"/>
<circle cx="307.200" cy="415.200" r="5.600" fill="#dcebf8" stroke="#8e98a2" stroke-width="1.400"/><path d="M307.200 415.200L309.600 412.300M307.200 415.200L305 414" stroke="#303840" stroke-width="1" fill="none"/><circle cx="306.500" cy="418.800" r="0.700" fill="#e89040"/>
<path d="M308.300 410.500C303.200 409.300 300 412.800 301.300 417" fill="none" stroke="#1ec01e" stroke-width="2.400"/><path d="M298.800 415.300l5.400 0.800l-2.600 4.100z" fill="#1ec01e"/>
<path d="M300.400 435l1 -5.500h5l1.300 5.500z" fill="#b8dcf4" stroke="#a0b4c4" stroke-width="0.600"/>
<path d="M297.500 438.500Q297.500 434.800 301 434.800H307.500Q313 436 313 439.500V441L309.200 444.500H301Q297.500 443.500 297.500 440.500Z" fill="#ebebeb" stroke="#a6aeb2" stroke-width="0.800"/>
<path d="M298.500 438.500Q304 436.500 312 439" stroke="#fff" stroke-width="1" fill="none"/><path d="M303.500 442.200L310.300 440.300V441.500L304.500 443.700Z" fill="#505050"/>
<rect x="297.500" y="456.500" width="15" height="14" fill="#ffffc6" stroke="#b4b4b4" stroke-width="1"/><path d="M297 456.500h16M297 470.500h16" stroke="#000" stroke-width="1" stroke-dasharray="1 1"/><path d="M303.800 456v15" stroke="#000" stroke-width="1.600" stroke-dasharray="2 1.400"/>
<rect x="297.500" y="482.500" width="10" height="10" fill="none" stroke="#000" stroke-width="1.200" stroke-dasharray="1.200 1.200"/>
<circle cx="306.800" cy="483.500" r="4.600" fill="#d6ecfa" stroke="#9aa8b4" stroke-width="1.200"/><path d="M310 487l3.500 3.500" stroke="#d08030" stroke-width="2"/>
<path d="M297.500 500v14M308.500 506v9" stroke="#000" stroke-width="1.200" stroke-dasharray="1.200 1.200" fill="none"/>
<circle cx="306.800" cy="506" r="4.600" fill="#d6ecfa" stroke="#9aa8b4" stroke-width="1.200"/><path d="M310 509.500l3.500 3.500" stroke="#d08030" stroke-width="2"/>
<circle cx="307" cy="526.500" r="4.600" fill="#f4f4f4" stroke="#a8a8a8" stroke-width="1.200"/><path d="M310 530l3 3.500" stroke="#a0a0a0" stroke-width="2"/><path d="M298 524.500h5l-1 4M298 524.500l4 4" stroke="#9a9a9a" stroke-width="1.200" fill="none"/>
<circle cx="305.500" cy="549" r="4.600" fill="#f6f6f6" stroke="#c0c0c0" stroke-width="1.200"/><path d="M309 552.500l3 3.500" stroke="#b8b8b8" stroke-width="2"/><path d="M308 546l4 -1.500l-1 4" stroke="#b0b0b0" stroke-width="1.200" fill="none"/>
<path d="M302.500 567.500v12l2.800 -2.600l2 4.300l1.800 -0.900l-2 -4.100h3.900z" fill="#000"/>
<path d="M301.300 600.500a4.300 4.300 0 0 1 7 -3.400" fill="none" stroke="#18961e" stroke-width="2.600"/><path d="M306 594.200l4.200 -0.800l-0.500 4.700z" fill="#18961e"/>
<path d="M309.900 601a4.300 4.300 0 0 1 -7 3.400" fill="none" stroke="#18961e" stroke-width="2.600"/><path d="M305.200 607.300l-4.200 0.800l0.500 -4.700z" fill="#18961e"/>
<circle cx="305.500" cy="622.800" r="6.500" fill="#4c9ee8" stroke="#b8c4d0" stroke-width="1.400"/><circle cx="305.500" cy="622.800" r="3.600" fill="#a8d4f8"/><path d="M305.500 622.500l3 -2.500M305.500 622.500l-3 0.500" stroke="#30404c" stroke-width="1"/>
<rect x="297.500" y="637.500" width="15" height="14" fill="#ffffc6" stroke="#a8a8a8" stroke-width="1"/><path d="M305 639v12M299 645h13" stroke="#000" stroke-width="1.200" stroke-dasharray="2.500 1.500"/>
<path d="M300 660l10 12M310 661l-9 10M299 667l12 -2" stroke="#a6a6a6" stroke-width="2.400" fill="none"/><circle cx="305" cy="666" r="2.500" fill="#b4b4b4"/>
</svg>
</body></html>
